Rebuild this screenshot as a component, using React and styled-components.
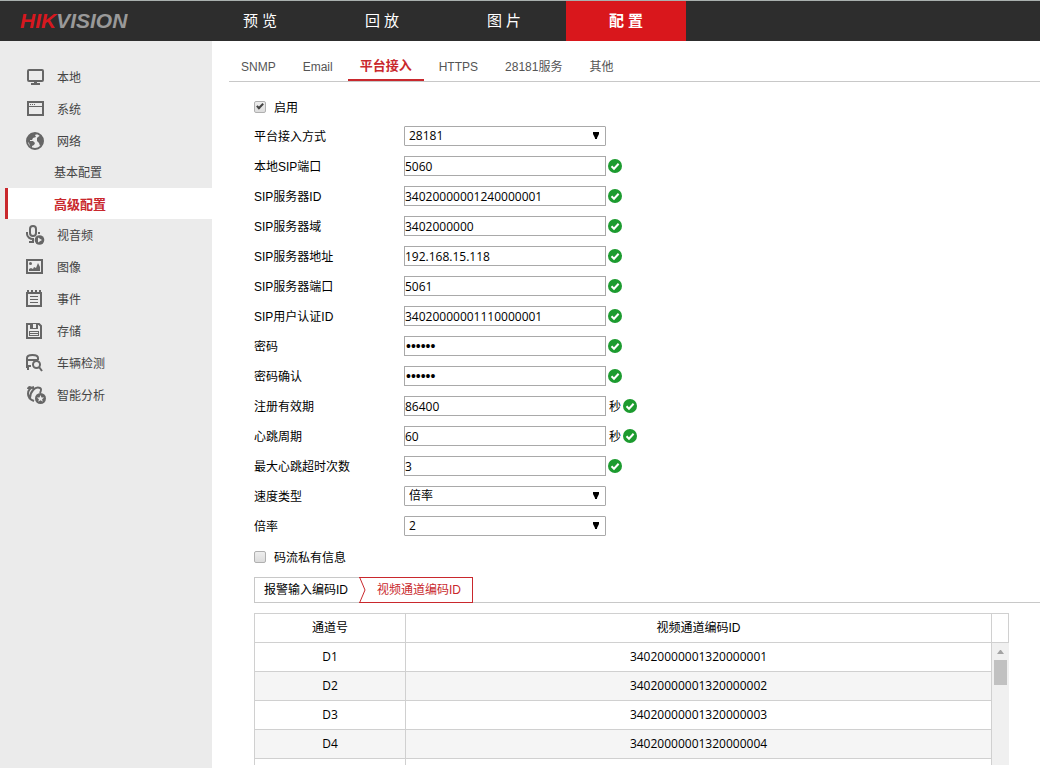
import React, { useState } from "react";
import styled, { createGlobalStyle } from "styled-components";

const navItems = ["预 览", "回 放", "图 片", "配 置"];
const tabs = ["SNMP", "Email", "平台接入", "HTTPS", "28181服务", "其他"];

const menu = [
  { label: "本地", icon: "monitor" },
  { label: "系统", icon: "window" },
  { label: "网络", icon: "globe", children: ["基本配置", "高级配置"] },
  { label: "视音频", icon: "mic" },
  { label: "图像", icon: "image" },
  { label: "事件", icon: "event" },
  { label: "存储", icon: "disk" },
  { label: "车辆检测", icon: "vehicle" },
  { label: "智能分析", icon: "smart" },
];

const fields = [
  { id: "mode", label: "平台接入方式", options: ["28181"] },
  { id: "localPort", label: "本地SIP端口", value: "5060" },
  { id: "serverId", label: "SIP服务器ID", value: "34020000001240000001" },
  { id: "domain", label: "SIP服务器域", value: "3402000000" },
  { id: "address", label: "SIP服务器地址", value: "192.168.15.118" },
  { id: "serverPort", label: "SIP服务器端口", value: "5061" },
  { id: "userId", label: "SIP用户认证ID", value: "34020000001110000001" },
  { id: "password", label: "密码", value: "123456", type: "password" },
  { id: "confirm", label: "密码确认", value: "123456", type: "password" },
  { id: "expiry", label: "注册有效期", value: "86400", unit: "秒" },
  { id: "heartbeat", label: "心跳周期", value: "60", unit: "秒" },
  { id: "timeouts", label: "最大心跳超时次数", value: "3" },
  { id: "speedType", label: "速度类型", options: ["倍率"] },
  { id: "speed", label: "倍率", options: ["2"] },
];

// the last row is an empty one
const channels = [
  ["D1", "34020000001320000001"],
  ["D2", "34020000001320000002"],
  ["D3", "34020000001320000003"],
  ["D4", "34020000001320000004"],
  ["", ""],
];

const icons = {
  monitor: (
    <>
      <rect x="2" y="3" width="15" height="11" rx="1" fill="none" stroke="#666" strokeWidth="2" />
      <path d="M8 14h3v2h3v2H5v-2h3z" />
    </>
  ),
  window: (
    <>
      <rect x="2" y="3" width="15" height="13" fill="none" stroke="#666" strokeWidth="2" />
      <path d="M2 7h15v1H2zM4 5h1v1H4zM6 5h1v1H6zM8 5h1v1H8z" />
    </>
  ),
  globe: (
    <>
      <circle cx="9" cy="10" r="8" fill="none" stroke="#666" strokeWidth="2" />
      <path d="M2 6l3-4 5 0 1 1-2 1 1 2-3 1-1 2-2 0 0 1 3 0 2 2-1 2-2 1 0 2-2-2-1-3-2-2zM12 6l3-2 2 4v4l-3 3-1-3-2-2 0-3z" />
    </>
  ),
  mic: (
    <>
      <rect x="4" y="1" width="6" height="10" rx="3" fill="none" stroke="#666" strokeWidth="2" />
      <path d="M1 7v2c0 3 3 5 6 5v3M3 17h5M13 7v2" fill="none" stroke="#666" strokeWidth="2" />
      <circle cx="13.5" cy="15" r="4.8" />
      <path d="M12 12.500v5l4-2.500z" fill="#ebebeb" />
    </>
  ),
  image: (
    <>
      <rect x="1" y="3" width="15" height="13" fill="none" stroke="#666" strokeWidth="2" />
      <circle cx="4.500" cy="6.500" r="1.500" />
      <path d="M3 14v-2l2-1 2 1 1-2 2 1 2-5 2 4v4z" />
    </>
  ),
  event: (
    <>
      <path d="M1 4h14v13H1z" fill="none" stroke="#666" strokeWidth="2" />
      <path d="M1 1h2v3H1zM5 1h2v3H5zM9 1h2v3H9zM13 1h2v3h-2zM4 7h8v1H4zM4 10h8v1H4zM4 13h8v1H4z" />
    </>
  ),
  disk: (
    <>
      <path d="M1 3h12l2 2v12H1z" fill="none" stroke="#666" strokeWidth="2" />
      <path d="M4 3h8v5H4z" />
      <path d="M7 3h3v4H7z" fill="#ebebeb" />
      <path d="M3 10h10v5H3z" />
      <path d="M4 11h8v1H4zM4 13h8v1H4z" fill="#ebebeb" />
    </>
  ),
  vehicle: (
    <>
      <path d="M1 15V5c0-4 11-4 11 0v2M1 7h11" fill="none" stroke="#666" strokeWidth="2" />
      <path d="M0 12h5v2H3v3H1v-2H0z" />
      <circle cx="10.500" cy="11.500" r="3.500" fill="none" stroke="#666" strokeWidth="2" />
      <path d="M13 14l3 4" stroke="#666" strokeWidth="2" />
    </>
  ),
  smart: (
    <>
      <path d="M8 16c-8-3-8-12 0-14M4 13C4 7 9 1 14 3M2 4c0-3 4-2 6 0M14 3c2 1 1 3 0 5" fill="none" stroke="#666" strokeWidth="2" />
      <circle cx="14.500" cy="13.500" r="5.500" />
      <path d="M14.500 10l1 2.400 2.600.2-2 1.600.7 2.500-2.300-1.400-2.300 1.400.7-2.500-2-1.600 2.600-.2z" fill="#ebebeb" />
    </>
  ),
};

const MenuIcon = ({ name }) => (
  <Svg width="20" height="20" viewBox="0 0 20 20" fill="#666" aria-hidden="true">
    {icons[name]}
  </Svg>
);

const ValidMark = () => (
  <Svg width="14" height="14" viewBox="0 0 14 14" aria-hidden="true">
    <circle cx="7" cy="7" r="7" fill="#1c9b2f" />
    <path d="M3.500 7.200l2.500 2.500 4.600-4.900" fill="none" stroke="#fff" strokeWidth="2" />
  </Svg>
);

const Field = ({ field }) => (
  <Row>
    <Label htmlFor={field.id}>{field.label}</Label>
    {field.options ? (
      <SelectBox>
        <Select id={field.id}>
          {field.options.map((option) => (
            <option key={option}>{option}</option>
          ))}
        </Select>
        <Arrow width="8" height="7" viewBox="0 0 8 7" aria-hidden="true">
          <path d="M1 0h6v2L5 6v1H3V6L1 2z" />
        </Arrow>
      </SelectBox>
    ) : (
      <>
        <Input id={field.id} type={field.type || "text"} defaultValue={field.value} />
        {field.unit && <Unit>{field.unit}</Unit>}
        <ValidMark />
      </>
    )}
  </Row>
);

const App = () => {
  const [tab, setTab] = useState("平台接入");

  return (
    <>
      <GlobalStyle />
      <Page>
        <Header>
          <Logo href="#">
            <span>HIK</span>VISION
          </Logo>
          <Nav>
            {navItems.map((item) => (
              <NavLink key={item} href="#" $active={item === "配 置"}>
                {item}
              </NavLink>
            ))}
          </Nav>
        </Header>
        <Body>
          <Sidebar>
            {menu.map((item) => (
              <React.Fragment key={item.label}>
                <MenuLink href="#">
                  <MenuIcon name={item.icon} />
                  <MenuText>{item.label}</MenuText>
                </MenuLink>
                {item.children?.map((child) => (
                  <SubLink key={child} href="#" $active={child === "高级配置"}>
                    {child}
                  </SubLink>
                ))}
              </React.Fragment>
            ))}
          </Sidebar>
          <Main>
            <Tabs>
              {tabs.map((name) => (
                <Tab key={name} $active={name === tab} onClick={() => setTab(name)}>
                  {name}
                </Tab>
              ))}
            </Tabs>
            <Form>
              <CheckRow>
                <Checkbox type="checkbox" defaultChecked />
                <CheckText>启用</CheckText>
              </CheckRow>
              {fields.map((field) => (
                <Field key={field.id} field={field} />
              ))}
              <CheckRow>
                <Checkbox type="checkbox" />
                <CheckText>码流私有信息</CheckText>
              </CheckRow>
            </Form>
            <Steps>
              <Step>报警输入编码ID</Step>
              <ActiveStep>
                <Svg width="7" height="26" viewBox="0 0 7 26" aria-hidden="true">
                  <path d="M0 .5h7M0 25.500h7M.5 0L6 13 .5 26" fill="none" stroke="#c9282d" />
                </Svg>
                <StepText>视频通道编码ID</StepText>
              </ActiveStep>
            </Steps>
            <TableFrame>
              <TableScroll>
                <Table>
                  <thead>
                    <tr>
                      <Th $narrow>通道号</Th>
                      <Th>视频通道编码ID</Th>
                    </tr>
                  </thead>
                  <tbody>
                    {channels.map(([channel, code]) => (
                      <Tr key={channel}>
                        <Td>{channel}</Td>
                        <Td>{code}</Td>
                      </Tr>
                    ))}
                  </tbody>
                </Table>
              </TableScroll>
              <ScrollColumn>
                <ScrollHead />
                <ScrollTrack>
                  <Svg width="7" height="4" viewBox="0 0 7 4" aria-hidden="true">
                    <path d="M3 0h1l3 4H0z" fill="#a3a3a3" />
                  </Svg>
                  <Thumb />
                </ScrollTrack>
              </ScrollColumn>
            </TableFrame>
          </Main>
        </Body>
      </Page>
    </>
  );
};

export default App;

const valueFont = `"Open Sans", "Noto Sans CJK SC", sans-serif`;

const GlobalStyle = createGlobalStyle`
  * {
    box-sizing: border-box;
  }
  body {
    margin: 0;
    background: #fff;
    color: #000;
    font: 12px/16px "Liberation Sans", "Noto Sans CJK SC", sans-serif;
  }
  a {
    text-decoration: none;
  }
  button, input, select {
    font: inherit;
    color: inherit;
  }
`;

const Svg = styled.svg`
  display: block;
  flex: none;
`;

const Page = styled.div`
  display: flex;
  flex-direction: column;
  min-height: 100vh;
`;

const Header = styled.header`
  display: flex;
  height: 41px;
  border-top: 1px solid #a9b0ae;
  background: #2d2d2d;
`;

const Logo = styled.a`
  width: 200px;
  padding-left: 20px;
  color: #999;
  font: italic bold 21px/40px "Liberation Sans", sans-serif;

  span {
    color: #d7181f;
  }
`;

const Nav = styled.nav`
  display: flex;
  gap: 2px;
`;

const NavLink = styled.a`
  width: 120px;
  color: #fff;
  background: ${({ $active }) => ($active ? "#d9171c" : "transparent")};
  font-size: 15px;
  font-weight: ${({ $active }) => ($active ? "bold" : "normal")};
  line-height: 40px;
  text-align: center;
`;

const Body = styled.div`
  display: flex;
  flex: 1;
`;

const Sidebar = styled.nav`
  width: 212px;
  flex: none;
  padding-top: 20px;
  background: #ebebeb;
`;

const MenuLink = styled.a`
  display: flex;
  align-items: center;
  gap: 11px;
  height: 32px;
  padding-left: 26px;
  color: #444;
`;

const MenuText = styled.span`
  padding-top: 2px;
`;

const SubLink = styled.a`
  display: block;
  height: 31px;
  margin-left: 5px;
  padding-left: 46px;
  border-left: 3px solid ${({ $active }) => ($active ? "#c9282d" : "transparent")};
  background: ${({ $active }) => ($active ? "#fff" : "transparent")};
  color: ${({ $active }) => ($active ? "#c9282d" : "#444")};
  font-size: ${({ $active }) => ($active ? "13px" : "12px")};
  font-weight: ${({ $active }) => ($active ? "bold" : "normal")};
  line-height: 33px;
`;

const Main = styled.main`
  flex: 1;
  min-width: 0;
  padding-left: 17px;
`;

const Tabs = styled.div`
  display: flex;
  gap: 3px;
  height: 41px;
  padding-top: 10px;
  border-bottom: 1px solid #c8c8c8;
`;

const Tab = styled.button`
  height: 30px;
  padding: ${({ $active }) => ($active ? "2px" : "4px")} 12px 0;
  border: 0;
  border-bottom: 2px solid ${({ $active }) => ($active ? "#c9282d" : "transparent")};
  background: none;
  color: ${({ $active }) => ($active ? "#c9282d" : "#555")};
  font-size: ${({ $active }) => ($active ? "13px" : "12px")};
  font-weight: ${({ $active }) => ($active ? "bold" : "normal")};
`;

const Form = styled.form`
  padding: 9px 0 6px 25px;
`;

const Row = styled.div`
  display: flex;
  align-items: center;
  gap: 2px;
  height: 30px;
`;

const Label = styled.label`
  width: 148px;
  padding-top: 2px;
`;

const Input = styled.input`
  width: 202px;
  height: 20px;
  padding: 0;
  border: 1px solid #a9a9a9;
  background: #fff;
  font-family: ${valueFont};

  &[type="password"] {
    padding: 0 1px;
    font: 14px "Liberation Sans", sans-serif;
  }
`;

const SelectBox = styled.div`
  position: relative;
  width: 202px;
`;

const Select = styled.select`
  display: block;
  width: 100%;
  height: 20px;
  padding: 0 4px;
  border: 1px solid #a9a9a9;
  border-radius: 1px;
  background: #fff;
  font-family: ${valueFont};
  appearance: none;
`;

const Arrow = styled.svg`
  position: absolute;
  top: 6px;
  right: 6px;
  pointer-events: none;
`;

const Unit = styled.span`
  padding: 2px 0 0 1px;
`;

const CheckRow = styled.label`
  display: flex;
  align-items: center;
  gap: 8px;
  height: 30px;
  padding-top: 2px;
`;

const CheckText = styled.span`
  padding-top: 1px;
`;

const Checkbox = styled.input`
  display: flex;
  justify-content: center;
  width: 12px;
  height: 12px;
  margin: 0;
  border: 1px solid #b0b0b0;
  border-radius: 2px;
  background: linear-gradient(#eee, #dcdcdc);
  appearance: none;

  &:checked::before {
    content: "";
    width: 2px;
    height: 5px;
    border: solid #444;
    border-width: 0 2px 2px 0;
    transform: rotate(45deg);
  }
`;

const Steps = styled.div`
  display: flex;
  height: 26px;
  margin-left: 25px;
  border-bottom: 1px solid #c8c8c8;
`;

const Step = styled.button`
  width: 105px;
  height: 26px;
  padding: 0 0 0 9px;
  border: 1px solid #c8c8c8;
  border-right: 0;
  background: #fff;
  text-align: left;
  white-space: nowrap;
`;

const ActiveStep = styled.button`
  display: flex;
  height: 26px;
  padding: 0;
  border: 0;
  background: #fff;
  color: #c9282d;
`;

const StepText = styled.span`
  width: 107px;
  border: 1px solid #c9282d;
  border-left: 0;
  padding-left: 11px;
  line-height: 24px;
  text-align: left;
  white-space: nowrap;
`;

const TableFrame = styled.div`
  display: flex;
  height: 152px;
  margin: 10px 31px 0 25px;
`;

const TableScroll = styled.div`
  flex: 1;
  overflow: auto;
  border-top: 1px solid #d0d0d0;
  scrollbar-width: none;
`;

const Table = styled.table`
  width: 100%;
  border-collapse: separate;
  border-spacing: 0;
  border-left: 1px solid #d0d0d0;
  table-layout: fixed;
`;

const Th = styled.th`
  width: ${({ $narrow }) => ($narrow ? "151px" : "auto")};
  height: 29px;
  padding: 0;
  border: solid #d0d0d0;
  border-width: 0 1px 1px 0;
  font-weight: normal;
`;

const Tr = styled.tr`
  background: #fff;

  &:nth-child(even) {
    background: #f5f5f5;
  }
`;

const Td = styled.td`
  height: 29px;
  padding: 0;
  border: solid #d0d0d0;
  border-width: 0 1px 1px 0;
  font-family: ${valueFont};
  text-align: center;
`;

const ScrollColumn = styled.div`
  display: flex;
  flex-direction: column;
  width: 17px;
`;

const ScrollHead = styled.div`
  height: 30px;
  border: 1px solid #d0d0d0;
  border-left: 0;
`;

const ScrollTrack = styled.div`
  display: flex;
  flex: 1;
  flex-direction: column;
  align-items: center;
  gap: 6px;
  padding-top: 7px;
  background: #f0f0f0;
`;

const Thumb = styled.div`
  width: 13px;
  height: 25px;
  background: #c1c1c1;
`;
